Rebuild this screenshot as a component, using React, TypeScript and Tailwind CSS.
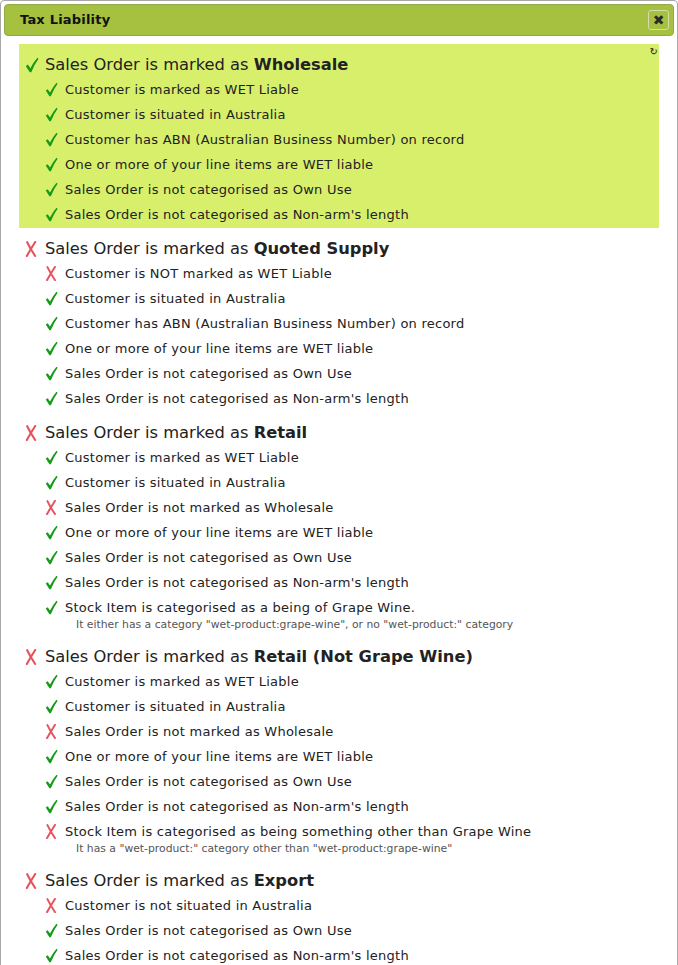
import React from "react";

type Item = { ok: boolean; text: string; note?: string };
type Section = { ok: boolean; name: string; items: Item[]; active?: boolean };

const sections: Section[] = [
  {
    ok: true,
    active: true,
    name: "Wholesale",
    items: [
      { ok: true, text: "Customer is marked as WET Liable" },
      { ok: true, text: "Customer is situated in Australia" },
      { ok: true, text: "Customer has ABN (Australian Business Number) on record" },
      { ok: true, text: "One or more of your line items are WET liable" },
      { ok: true, text: "Sales Order is not categorised as Own Use" },
      { ok: true, text: "Sales Order is not categorised as Non-arm's length" },
    ],
  },
  {
    ok: false,
    name: "Quoted Supply",
    items: [
      { ok: false, text: "Customer is NOT marked as WET Liable" },
      { ok: true, text: "Customer is situated in Australia" },
      { ok: true, text: "Customer has ABN (Australian Business Number) on record" },
      { ok: true, text: "One or more of your line items are WET liable" },
      { ok: true, text: "Sales Order is not categorised as Own Use" },
      { ok: true, text: "Sales Order is not categorised as Non-arm's length" },
    ],
  },
  {
    ok: false,
    name: "Retail",
    items: [
      { ok: true, text: "Customer is marked as WET Liable" },
      { ok: true, text: "Customer is situated in Australia" },
      { ok: false, text: "Sales Order is not marked as Wholesale" },
      { ok: true, text: "One or more of your line items are WET liable" },
      { ok: true, text: "Sales Order is not categorised as Own Use" },
      { ok: true, text: "Sales Order is not categorised as Non-arm's length" },
      {
        ok: true,
        text: "Stock Item is categorised as a being of Grape Wine.",
        note: 'It either has a category "wet-product:grape-wine", or no "wet-product:" category',
      },
    ],
  },
  {
    ok: false,
    name: "Retail (Not Grape Wine)",
    items: [
      { ok: true, text: "Customer is marked as WET Liable" },
      { ok: true, text: "Customer is situated in Australia" },
      { ok: false, text: "Sales Order is not marked as Wholesale" },
      { ok: true, text: "One or more of your line items are WET liable" },
      { ok: true, text: "Sales Order is not categorised as Own Use" },
      { ok: true, text: "Sales Order is not categorised as Non-arm's length" },
      {
        ok: false,
        text: "Stock Item is categorised as being something other than Grape Wine",
        note: 'It has a "wet-product:" category other than "wet-product:grape-wine"',
      },
    ],
  },
  {
    ok: false,
    name: "Export",
    items: [
      { ok: false, text: "Customer is not situated in Australia" },
      { ok: true, text: "Sales Order is not categorised as Own Use" },
      { ok: true, text: "Sales Order is not categorised as Non-arm's length" },
    ],
  },
];

function Check({ big }: { big?: boolean }) {
  const w = big ? 14 : 13;
  const h = big ? 16 : 15;
  return (
    <svg width={w} height={h} viewBox="0 0 14 16" className="block">
      <path
        d="M0.8 9.2 L2.9 7.6 L5.4 11.2 Q8.5 5.2 12.4 0.8 L13.6 1.8 Q9.4 7.4 6.3 15.2 L4.8 15.2 Z"
        fill="#169a18"
      />
    </svg>
  );
}

function Cross({ big }: { big?: boolean }) {
  const w = big ? 12 : 12;
  const h = big ? 16 : 15;
  return (
    <svg width={w} height={h} viewBox="0 0 12 16" className="block">
      <path
        d="M2.2 1.2 Q5.5 8 10.2 15"
        stroke="#e5535c"
        strokeWidth="2.1"
        fill="none"
        strokeLinecap="round"
      />
      <path
        d="M10.2 1 Q6 7.5 1.8 15"
        stroke="#e5535c"
        strokeWidth="2.1"
        fill="none"
        strokeLinecap="round"
      />
    </svg>
  );
}

function Mark({ ok, big }: { ok: boolean; big?: boolean }) {
  return (
    <span className="inline-flex w-[20px] items-center">
      {ok ? <Check big={big} /> : <Cross big={big} />}
    </span>
  );
}

export default function App() {
  return (
    <div
      className="w-[678px] h-[965px] overflow-hidden bg-white text-[#222]"
      style={{ fontFamily: '"DejaVu Sans", Verdana, sans-serif' }}
    >
      <div className="border border-[#a8a8a8] rounded-[4px] p-[3px] min-h-[980px]">
        <div className="h-[32px] bg-[#a6c03f] border border-[#93a84a] rounded-[4px] flex items-center pl-[15px] pr-[4px]">
          <div className="flex-1 font-bold text-[13px] tracking-[0.2px] text-[#111]">
            Tax Liability
          </div>
          <div className="w-[21px] h-[20px] border border-[#d3deaa] rounded-[3px] flex items-center justify-center text-[14px] text-[#2a2a2a] leading-none">
            ✖
          </div>
        </div>
        <div className="px-[15px] pt-[8px]">
          {sections.map((s, i) => (
            <div
              key={i}
              className={
                "relative pl-[6px] pt-[8px] pb-[1px] " + (s.active ? "bg-[#d8ef6c]" : "")
              }
            >
              {s.active && (
                <span className="absolute right-[1px] top-[0px] text-[10px] text-[#222]">↻</span>
              )}
              <div className="h-[24px] leading-[24px] text-[16.3px] flex items-center whitespace-nowrap translate-y-[1px]">
                <Mark ok={s.ok} big />
                <span>
                  Sales Order is marked as <b>{s.name}</b>
                </span>
              </div>
              <div className="mt-[1px] pl-[20px]">
                {s.items.map((it, j) => (
                  <div key={j}>
                    <div className="h-[25px] leading-[25px] text-[13px] tracking-[0.25px] flex items-center whitespace-nowrap">
                      <Mark ok={it.ok} />
                      <span>{it.text}</span>
                    </div>
                    {it.note && (
                      <div className="mt-[-2px] mb-[3px] pl-[31px] text-[10.8px] leading-[14px] text-[#555] whitespace-nowrap">
                        {it.note}
                      </div>
                    )}
                  </div>
                ))}
              </div>
            </div>
          ))}
        </div>
      </div>
    </div>
  );
}
